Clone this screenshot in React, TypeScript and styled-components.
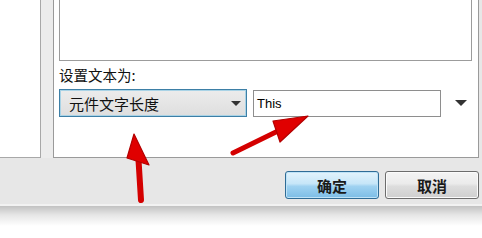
import styled, { createGlobalStyle } from 'styled-components';

const Global = createGlobalStyle`
  html, body {
    margin: 0;
    padding: 0;
    background: #ffffff;
  }
`;

const Root = styled.div`
  position: relative;
  width: 482px;
  height: 238px;
  overflow: hidden;
  background: #ffffff;
  font-family: "Noto Sans CJK SC", "Liberation Sans", sans-serif;
`;

const Window = styled.div`
  display: flex;
  flex-direction: column;
  height: 204px;
  background: #e7e7e7;
  border-bottom: 2px solid #f2f2f2;
`;

const Top = styled.div`
  display: flex;
  height: 158px;
`;

const LeftPane = styled.div`
  width: 40px;
  height: 157px;
  background: #ffffff;
  border-right: 1px solid #a8a8a8;
  border-bottom: 1px solid #a8a8a8;
`;

const Strip = styled.div`
  width: 12px;
  background: #ececec;
`;

const Panel = styled.div`
  flex: 1;
  display: flex;
  flex-direction: column;
  margin-right: 3px;
  padding: 0 6px 0 5px;
  background: #ffffff;
  border-left: 1px solid #9a9a9a;
  border-right: 1px solid #9a9a9a;
  border-bottom: 1px solid #9a9a9a;
`;

const ListBox = styled.div`
  height: 60px;
  background: #ffffff;
  border: 1px solid #9c9c9c;
  border-top: none;
`;

const Label = styled.div`
  height: 28px;
  padding-top: 3px;
  box-sizing: border-box;
  font-size: 14.5px;
  line-height: 22px;
  color: #111111;
`;

const Row = styled.div`
  display: flex;
  align-items: center;
  gap: 6px;
  height: 28px;
`;

const Combo = styled.div`
  display: flex;
  align-items: center;
  justify-content: space-between;
  box-sizing: border-box;
  width: 188px;
  height: 28px;
  padding: 0 5px 0 9px;
  background: linear-gradient(#ececec, #dedede);
  border: 1px solid #3d7fa6;
  box-shadow: inset 0 0 0 1px #a9d3e6;
  font-size: 15px;
  color: #111111;
`;

const TextBox = styled.div`
  display: flex;
  align-items: center;
  box-sizing: border-box;
  width: 188px;
  height: 27px;
  padding-left: 3px;
  background: #ffffff;
  border: 1px solid #8e8e8e;
  font-family: "Liberation Sans", Arial, sans-serif;
  font-size: 13px;
  color: #000000;
`;

const Caret = styled.span<{ $size: number }>`
  width: 0;
  height: 0;
  border-left: ${(p) => p.$size}px solid transparent;
  border-right: ${(p) => p.$size}px solid transparent;
  border-top: ${(p) => p.$size}px solid #333333;
`;

const LooseCaret = styled(Caret)`
  margin-left: 8px;
`;

const Buttons = styled.div`
  display: flex;
  justify-content: flex-end;
  gap: 6px;
  padding: 13px 3px 0 0;
`;

const Button = styled.div<{ $primary?: boolean }>`
  display: flex;
  align-items: center;
  justify-content: center;
  box-sizing: border-box;
  width: 94px;
  height: 28px;
  border-radius: 3px;
  font-size: 15px;
  font-weight: 700;
  color: #1a1a1a;
  border: 1px solid ${(p) => (p.$primary ? '#2f6c96' : '#6c6c6c')};
  background: ${(p) =>
    p.$primary
      ? 'linear-gradient(#e3f3fc 0%, #c6e6f8 45%, #9fd2f1 55%, #7cbde6 100%)'
      : 'linear-gradient(#f4f4f4 0%, #ebebeb 45%, #dddddd 55%, #cfcfcf 100%)'};
  box-shadow: inset 0 0 0 1px ${(p) => (p.$primary ? '#bfe3f7' : '#fbfbfb')};
`;

const Shadow = styled.div`
  height: 20px;
  background: linear-gradient(#c2c2c2, #e6e6e6 45%, #ffffff);
`;

const Overlay = styled.svg`
  position: absolute;
  left: 0;
  top: 0;
  width: 482px;
  height: 238px;
  pointer-events: none;
`;

export default function App() {
  return (
    <Root>
      <Global />
      <Window>
        <Top>
          <LeftPane />
          <Strip />
          <Panel>
            <ListBox />
            <Label>设置文本为:</Label>
            <Row>
              <Combo>
                <span>元件文字长度</span>
                <Caret $size={5} />
              </Combo>
              <TextBox>This</TextBox>
              <LooseCaret $size={6} />
            </Row>
          </Panel>
        </Top>
        <Buttons>
          <Button $primary>确定</Button>
          <Button>取消</Button>
        </Buttons>
      </Window>
      <Shadow />
      <Overlay viewBox="0 0 482 238">
        <defs>
          <filter id="glow" x="-20%" y="-20%" width="140%" height="140%">
            <feGaussianBlur stdDeviation="0.8" />
          </filter>
        </defs>
        <g stroke="#b30000" strokeWidth="1.2" strokeLinejoin="round" fill="#e00000">
          <line x1="141" y1="200" x2="138.5" y2="160" stroke="#d40000" strokeWidth="6" strokeLinecap="round" />
          <polygon points="134,134 149,165 127,158" />
          <line x1="233" y1="153" x2="280" y2="130" stroke="#d40000" strokeWidth="5" strokeLinecap="round" />
          <polygon points="308,116 280,142 273,121" />
        </g>
      </Overlay>
    </Root>
  );
}
